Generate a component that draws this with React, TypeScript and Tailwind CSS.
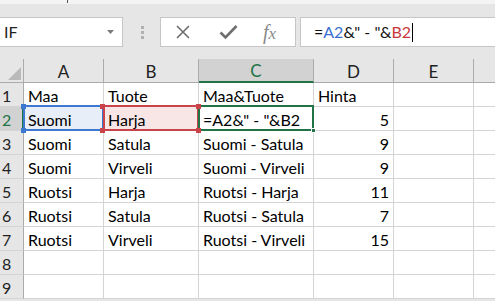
import React from 'react';

const GRID = 'border-r border-b border-[#d4d4d4]';
const COLS = [
  { key: 'A', w: 'w-[80px]' },
  { key: 'B', w: 'w-[95px]' },
  { key: 'C', w: 'w-[115px]' },
  { key: 'D', w: 'w-[80px]' },
  { key: 'E', w: 'w-[80px]' },
];

const rows: (string | number)[][] = [
  ['Maa', 'Tuote', 'Maa&Tuote', 'Hinta'],
  ['Suomi', 'Harja', '=A2&" - "&B2', 5],
  ['Suomi', 'Satula', 'Suomi - Satula', 9],
  ['Suomi', 'Virveli', 'Suomi - Virveli', 9],
  ['Ruotsi', 'Harja', 'Ruotsi - Harja', 11],
  ['Ruotsi', 'Satula', 'Ruotsi - Satula', 7],
  ['Ruotsi', 'Virveli', 'Ruotsi - Virveli', 15],
  [],
  [],
];

function Handle({ pos, color }: { pos: string; color: string }) {
  return <span className={`absolute w-[5px] h-[5px] z-20 ${pos} ${color}`} />;
}

function Cell({ row, col, value }: { row: number; col: number; value?: string | number }) {
  const w = COLS[col].w;
  const isNum = typeof value === 'number';
  let bg = 'bg-white';
  let overlay: React.ReactNode = null;
  if (row === 2 && col === 0) {
    bg = 'bg-[#e8eef8]';
    overlay = (
      <>
        <span className="absolute -top-[2px] -left-[1px] -right-[1px] -bottom-[1px] border-2 border-[#3c78d0] z-10" />
        <Handle pos="-top-[3px] -left-[3px]" color="bg-[#3c78d0]" />
        <Handle pos="-bottom-[3px] -left-[3px]" color="bg-[#3c78d0]" />
      </>
    );
  } else if (row === 2 && col === 1) {
    bg = 'bg-[#f8e6e6]';
    overlay = (
      <>
        <span className="absolute -top-[2px] -left-[1px] -right-[1px] -bottom-[1px] border-2 border-[#c8444a] z-10" />
        <Handle pos="-top-[3px] -left-[4px]" color="bg-[#c8444a]" />
        <Handle pos="-bottom-[3px] -left-[4px]" color="bg-[#c8444a]" />
        <Handle pos="-top-[3px] -right-[3px]" color="bg-[#c8444a]" />
        <Handle pos="-bottom-[3px] -right-[3px]" color="bg-[#c8444a]" />
      </>
    );
  } else if (row === 2 && col === 2) {
    overlay = (
      <>
        <span className="absolute -top-[2px] -left-[1px] -right-[1px] -bottom-[1px] border-2 border-[#217346] z-10" />
        <span className="absolute -bottom-[3px] -right-[3px] w-[5px] h-[5px] bg-[#217346] border border-white z-20" />
      </>
    );
  }
  return (
    <div
      className={`relative shrink-0 h-[24px] ${w} ${GRID} ${bg} flex items-center pt-[3px] ${
        isNum ? 'justify-end pr-[4px]' : 'pl-[4px]'
      } whitespace-nowrap text-[16px] text-black`}
    >
      {overlay}
      <span className="relative">{value}</span>
    </div>
  );
}

export default function App() {
  return (
    <div className="w-[495px] h-[301px] overflow-hidden bg-[#e6e6e6] font-['Lato','Liberation_Sans',sans-serif]">
      {/* strip from window above */}
      <div className="h-[4px] bg-[#f4f4f4] relative">
        <span className="absolute left-[67px] top-0 w-[1px] h-[3px] bg-[#555]" />
      </div>

      {/* formula bar */}
      <div className="flex items-center pt-[13px] pb-[12px] h-[55px]">
        <div className="w-[123px] h-[30px] bg-white border border-[#c6c6c6] border-l-0 flex items-center justify-between pl-[4px] pr-[8px]">
          <span className="text-[16px] text-[#222]">IF</span>
          <svg width="7" height="4" viewBox="0 0 7 4">
            <path d="M0 0h7L3.5 4z" fill="#7a7a7a" />
          </svg>
        </div>
        <div className="w-[37px] flex flex-col items-center gap-[2px] pl-[1px]">
          <span className="w-[3px] h-[3px] bg-[#b0b0b0]" />
          <span className="w-[3px] h-[3px] bg-[#b0b0b0]" />
          <span className="w-[3px] h-[3px] bg-[#b0b0b0]" />
        </div>
        <div className="w-[136px] h-[30px] bg-white border border-[#c6c6c6] flex items-center">
          <svg className="ml-[14px]" width="16" height="16" viewBox="0 0 16 16">
            <path d="M2 2l12 12M14 2L2 14" stroke="#6e6e6e" strokeWidth="1.6" />
          </svg>
          <svg className="ml-[28px]" width="19" height="16" viewBox="0 0 19 16">
            <path d="M1.5 8.5l5 5L17.5 2" stroke="#6e6e6e" strokeWidth="2.6" fill="none" />
          </svg>
          <span className="ml-[25px] text-[20px] italic text-[#8a8a8a] font-['Liberation_Serif',serif] leading-none">
            f<span className="text-[17px]">x</span>
          </span>
        </div>
        <div className="ml-[4px] flex-1 h-[30px] bg-white border border-[#c6c6c6] border-r-0 flex items-center pl-[13px] text-[16px] text-[#111]">
          <span>=</span>
          <span className="text-[#3a6fcf]">A2</span>
          <span>&amp;" - "&amp;</span>
          <span className="text-[#c7383d]">B2</span>
          <span className="w-[1px] h-[19px] bg-black ml-[1px]" />
        </div>
      </div>

      {/* column headers */}
      <div className="flex h-[24px]">
        <div className="relative w-[24px] shrink-0 border-r border-b border-[#ababab] bg-[#e6e6e6]">
          <svg className="absolute right-[2px] bottom-[2px]" width="13" height="13" viewBox="0 0 13 13">
            <path d="M13 0V13H0z" fill="#b9b9b9" />
          </svg>
        </div>
        {COLS.map((c) => (
          <div
            key={c.key}
            className={`shrink-0 ${c.w} flex items-center justify-center pt-[2px] text-[17px] border-r ${
              c.key === 'C'
                ? 'bg-[#d2d2d2] text-[#217346] border-b-2 border-b-[#217346] border-r-[#ababab]'
                : 'bg-[#e6e6e6] text-[#222] border-b border-[#ababab]'
            }`}
          >
            {c.key}
          </div>
        ))}
        <div className="flex-1 bg-[#e6e6e6] border-b border-[#ababab]" />
      </div>

      {/* rows */}
      {rows.map((r, i) => {
        const n = i + 1;
        const sel = n === 2;
        return (
          <div key={n} className="flex h-[24px]">
            <div
              className={`w-[24px] shrink-0 flex items-center pl-[2px] pt-[2px] text-[16px] border-b border-[#d4d4d4] ${
                sel
                  ? 'bg-[#d2d2d2] text-[#217346] border-r-2 border-r-[#217346]'
                  : 'bg-[#e6e6e6] text-[#222] border-r border-r-[#ababab]'
              }`}
            >
              {n}
            </div>
            {COLS.map((c, ci) => (
              <Cell key={c.key} row={n} col={ci} value={r[ci]} />
            ))}
            <div className="flex-1 bg-white border-b border-[#d4d4d4]" />
          </div>
        );
      })}
    </div>
  );
}
